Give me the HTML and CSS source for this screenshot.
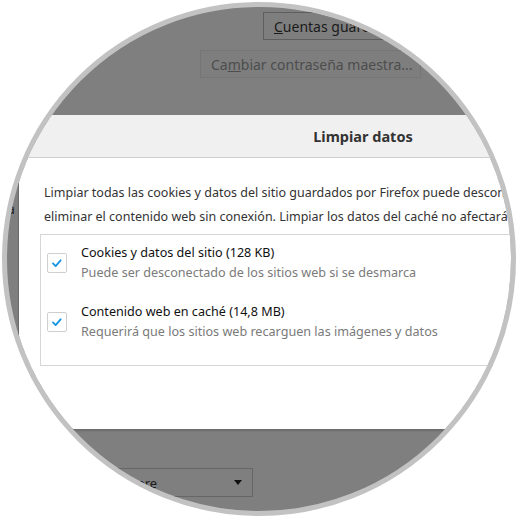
FILE: index.html
```html
<!DOCTYPE html>
<html>
<head>
    <title>Limpiar datos</title>
    <link rel="stylesheet" href="styles.css">
</head>
<body>
    <div class="lens">
        <div class="page">
            <!-- dimmed settings page behind the dialog -->
            <div class="top">
                <button class="btn btn-main"><u>C</u>uentas guardadas...</button>
                <button class="btn btn-off">Ca<u>m</u>biar contraseña maestra...</button>
            </div>

            <div class="middle">
                <div class="strip">a</div>

                <div class="dialog">
                    <div class="dialog-head">Limpiar datos</div>
                    <div class="dialog-body">
                        <p class="intro">
                            Limpiar todas las cookies y datos del sitio guardados por Firefox puede desconectarle de los sitios web y<br>
                            eliminar el contenido web sin conexión. Limpiar los datos del caché no afectará a sus inicios de sesión.
                        </p>
                        <div class="options">
                            <div class="option">
                                <span class="check">
                                    <svg width="20" height="20" viewBox="0 0 20 20"><polyline points="5.5,10.5 8.5,13.5 14,7" fill="none" stroke="#1496e4" stroke-width="2" stroke-linecap="round" stroke-linejoin="round"/></svg>
                                </span>
                                <div class="option-text">
                                    <div class="option-title">Cookies y datos del sitio (128 KB)</div>
                                    <div class="option-sub">Puede ser desconectado de los sitios web si se desmarca</div>
                                </div>
                            </div>
                            <div class="option">
                                <span class="check">
                                    <svg width="20" height="20" viewBox="0 0 20 20"><polyline points="5.5,10.5 8.5,13.5 14,7" fill="none" stroke="#1496e4" stroke-width="2" stroke-linecap="round" stroke-linejoin="round"/></svg>
                                </span>
                                <div class="option-text">
                                    <div class="option-title">Contenido web en caché (14,8 MB)</div>
                                    <div class="option-sub">Requerirá que los sitios web recarguen las imágenes y datos</div>
                                </div>
                            </div>
                        </div>
                    </div>
                </div>
            </div>

            <div class="bottom">
                <div class="select">
                    <span>Recordar siempre</span>
                    <span class="arrow"></span>
                </div>
            </div>
        </div>
    </div>
</body>
</html>
```

FILE: styles.css
```css
body {
    margin: 0;
    padding: 2px;
    background-color: #fff;
    font-family: "Noto Sans", "Open Sans", sans-serif;
}

.lens {
    width: 514px;
    height: 514px;
    box-sizing: border-box;
    border: 5px solid #c2c2c2;
    border-radius: 50%;
    overflow: hidden;
    background-color: #7f7f7f;
}

.page {
    display: flex;
    flex-direction: column;
    width: 800px;
}

/* Top buttons */
.top {
    height: 108px;
    display: flex;
    flex-direction: column;
    align-items: flex-start;
}

.btn {
    height: 28px;
    font-family: inherit;
    font-size: 14px;
    background-color: #7e7e7e;
    padding: 0 10px;
    text-align: left;
    white-space: nowrap;
}

.btn-main {
    margin-top: 5px;
    margin-left: 256px;
    width: 200px;
    border: 1px solid #5e5e5e;
    color: #1a1a1a;
}

.btn-off {
    margin-top: 10px;
    margin-left: 193px;
    width: 221px;
    border: 1px solid #767676;
    color: #4d4d4d;
}

/* Middle: strip + dialog */
.middle {
    display: flex;
    height: 314px;
}

.strip {
    width: 12px;
    flex-shrink: 0;
    padding-top: 84px;
    font-size: 14px;
    color: #222;
    overflow: hidden;
    box-sizing: border-box;
    box-shadow: inset -1px 0 0 #707070;
}

.dialog {
    width: 688px;
    flex-shrink: 0;
    background-color: #fff;
    box-shadow: 0 2px 2px rgba(0, 0, 0, 0.15);
}

.dialog-head {
    height: 42px;
    line-height: 42px;
    text-align: center;
    background-color: #f0f0f0;
    border-bottom: 1px solid #cfcfcf;
    font-size: 14.5px;
    font-weight: bold;
    color: #333;
}

.dialog-body {
    padding: 23px 0 0 21px;
}

.intro {
    margin: 0 0 5px 4px;
    font-size: 12.5px;
    line-height: 24px;
    color: #333;
    white-space: nowrap;
}

.options {
    border: 1px solid #d6d6d6;
    padding: 8px 0 23px 6px;
    display: flex;
    flex-direction: column;
    gap: 19px;
}

.option {
    display: flex;
    align-items: center;
    gap: 14px;
}

.check {
    width: 20px;
    height: 20px;
    box-sizing: border-box;
    border: 1px solid #cfcfcf;
    border-radius: 2px;
    display: flex;
    align-items: center;
    justify-content: center;
}

.check svg {
    display: block;
}

.option-text {
    font-size: 12.6px;
    line-height: 20px;
    white-space: nowrap;
}

.option-title {
    color: #111;
}

.option-sub {
    color: #7a7a7a;
}

/* Bottom dropdown */
.bottom {
    padding-top: 39px;
}

.select {
    margin-left: 33px;
    width: 213px;
    height: 29px;
    box-sizing: border-box;
    border: 1px solid #666;
    display: flex;
    align-items: center;
    justify-content: space-between;
    padding: 0 10px 0 8px;
    font-size: 13px;
    color: #1a1a1a;
}

.arrow {
    width: 0;
    height: 0;
    border-left: 4px solid transparent;
    border-right: 4px solid transparent;
    border-top: 5px solid #111;
}
```
